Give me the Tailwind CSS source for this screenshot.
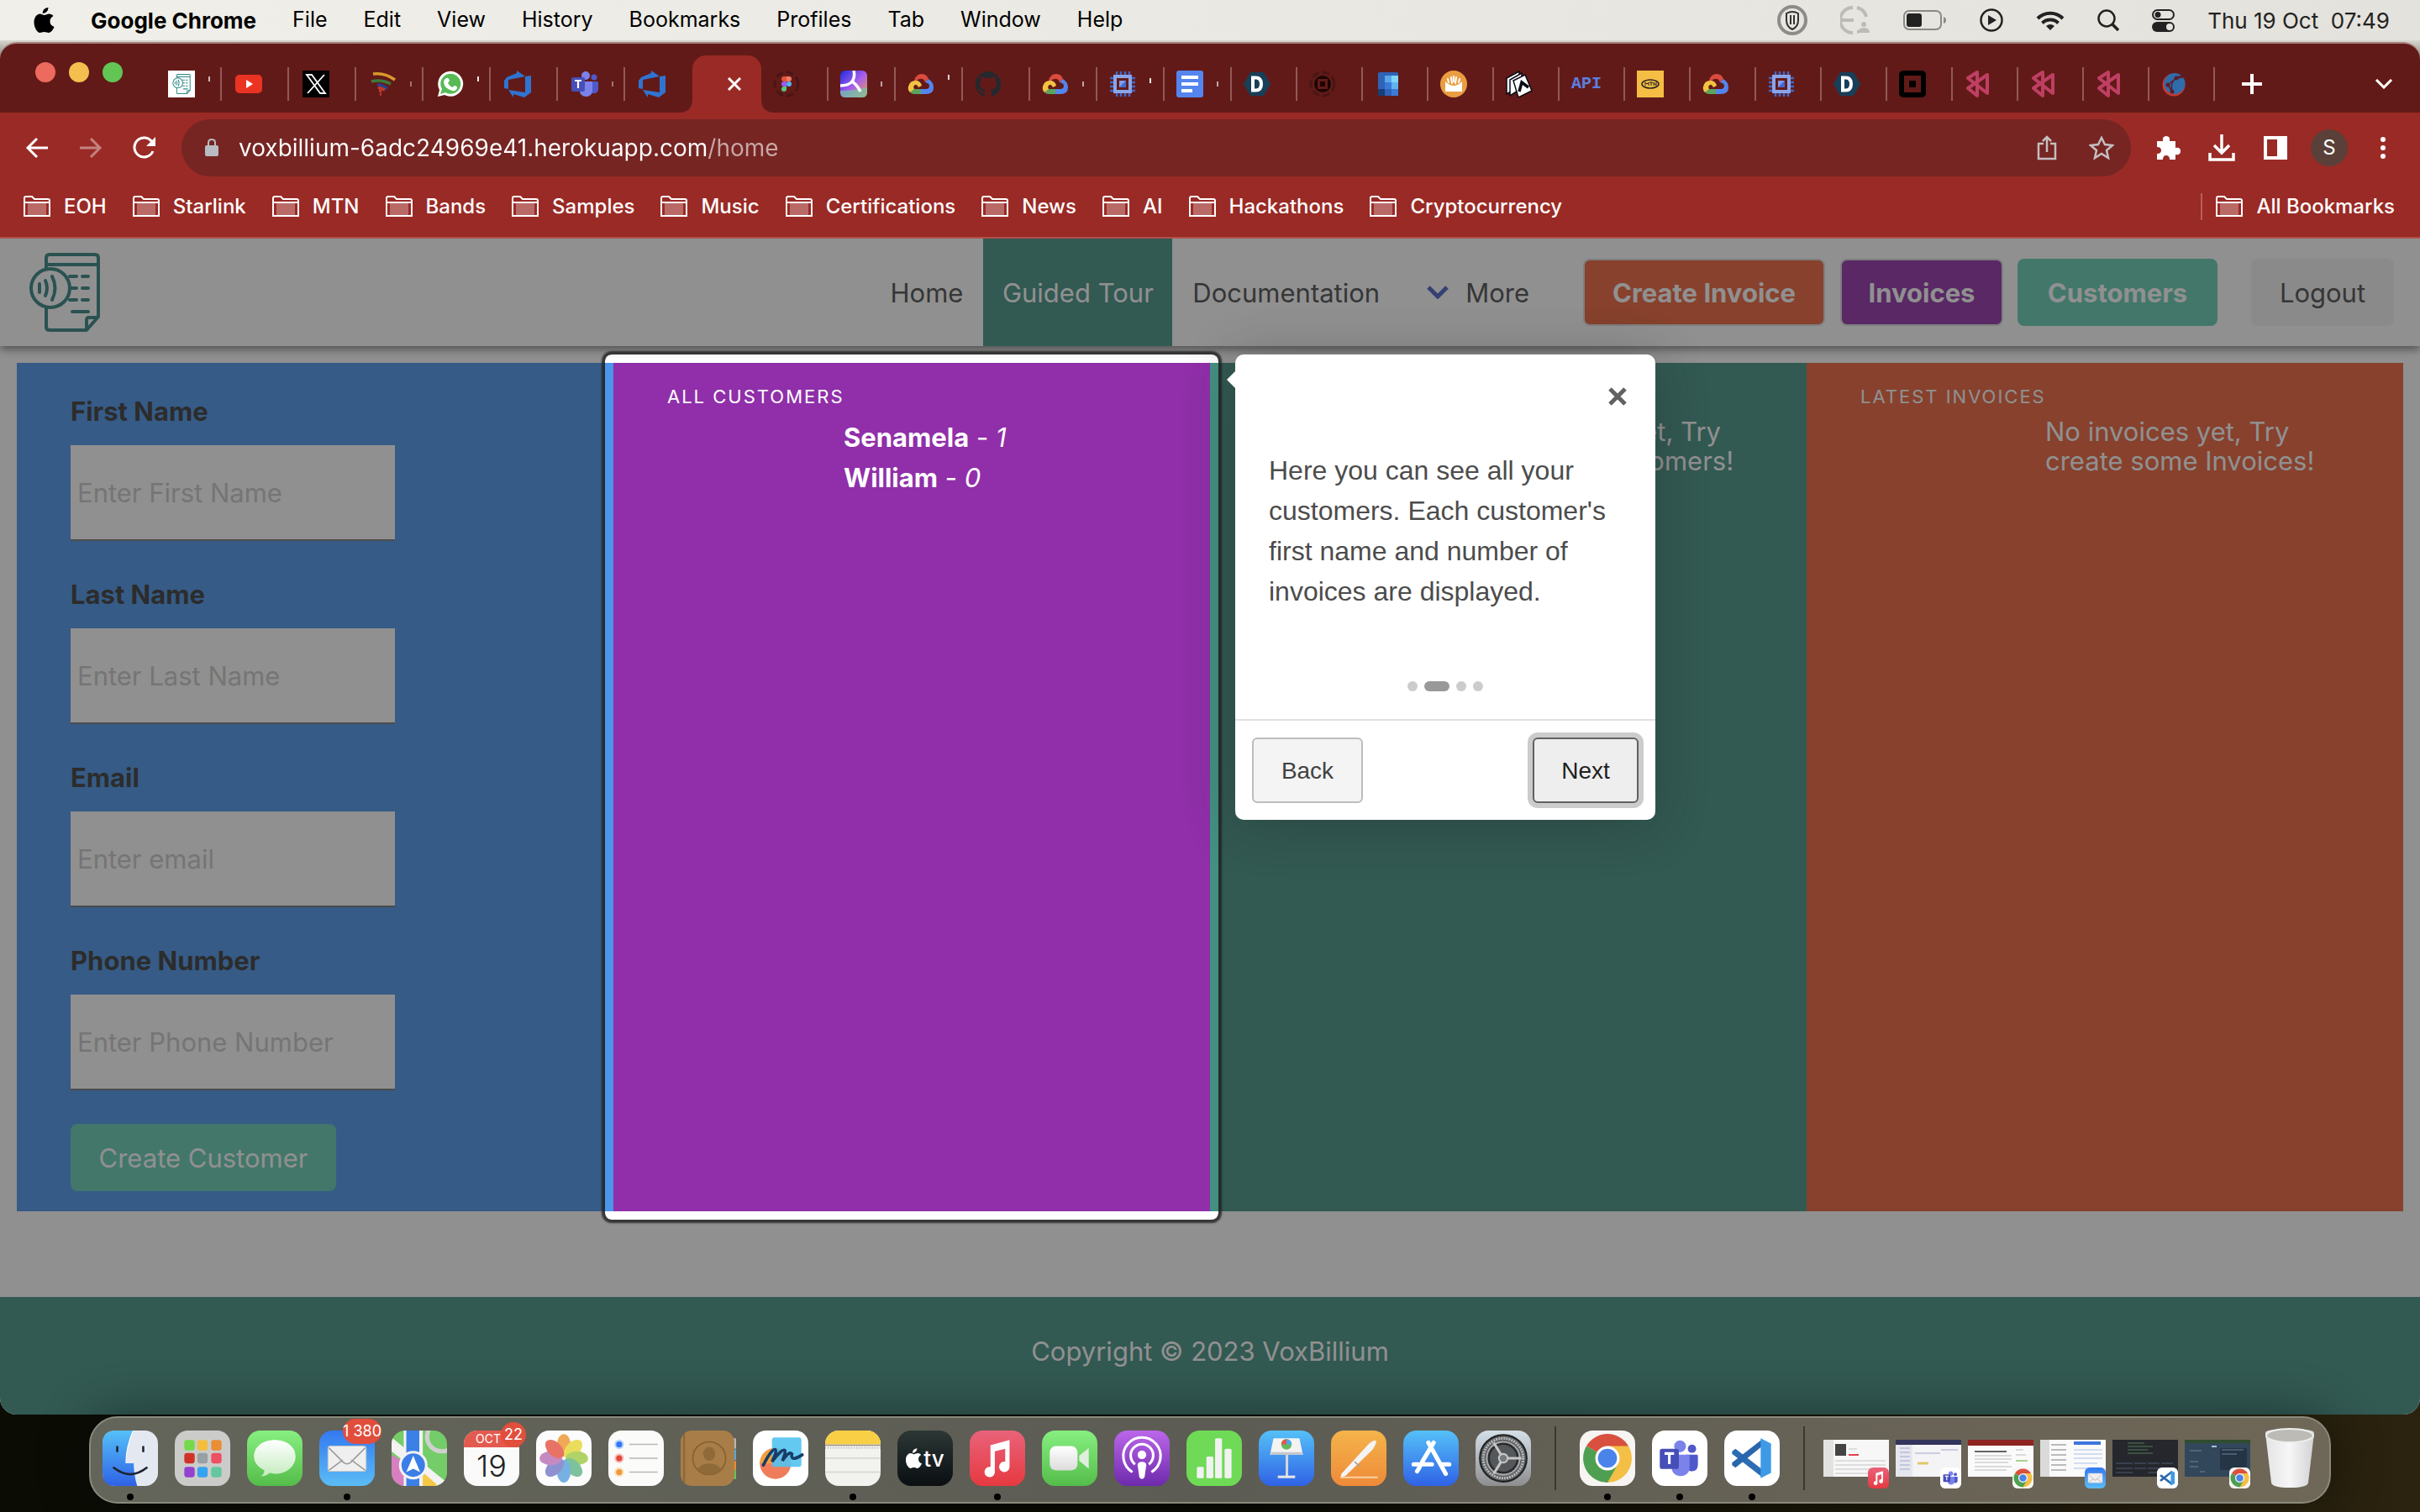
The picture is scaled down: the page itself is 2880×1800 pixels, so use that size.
<!DOCTYPE html>
<html lang="en">
<head>
    <meta charset="UTF-8">
    <meta name="viewport" content="width=device-width, initial-scale=1.0">
    <title>VoxBillium</title>
    <script src="https://cdn.jsdelivr.net/npm/@tailwindcss/browser@4"></script>
</head>
<body class="min-h-screen flex flex-col overflow-hidden bg-linear-to-r from-[#0b0d05] via-[#0a0b04] to-[#2b230f] font-['Inter',sans-serif]">

    <!-- Shared icons -->
    <svg class="absolute size-0" aria-hidden="true">
        <defs>
            <linearGradient id="gBlue" x2="0" y2="1"><stop stop-color="#3478f0"/><stop offset="1" stop-color="#5bbdf6"/></linearGradient>
            <linearGradient id="gSky" x2="0" y2="1"><stop stop-color="#55c0f8"/><stop offset="1" stop-color="#2f62e6"/></linearGradient>
            <linearGradient id="gGreen" x2="0" y2="1"><stop stop-color="#86ef80"/><stop offset="1" stop-color="#55bd4a"/></linearGradient>
            <linearGradient id="gRed" x2="0" y2="1"><stop stop-color="#e9637a"/><stop offset="1" stop-color="#e63940"/></linearGradient>
            <linearGradient id="gPurple" x2="0" y2="1"><stop stop-color="#bb66ea"/><stop offset="1" stop-color="#6e2aac"/></linearGradient>
            <linearGradient id="gOrange" x2="0" y2="1"><stop stop-color="#f5b44b"/><stop offset="1" stop-color="#ee8a38"/></linearGradient>
            <linearGradient id="gWhite" x2="0" y2="1"><stop stop-color="#ffffff"/><stop offset="1" stop-color="#dcdcdc"/></linearGradient>
            <linearGradient id="gBubble" x2="0" y2="1"><stop stop-color="#ffffff"/><stop offset="1" stop-color="#c3ecbd"/></linearGradient>
            <linearGradient id="gGray" x2="0" y2="1"><stop stop-color="#d4dfe8"/><stop offset="1" stop-color="#8e8e90"/></linearGradient>
            <linearGradient id="gRainbow" x2="1" y2="1"><stop stop-color="#1b2be0"/><stop offset=".5" stop-color="#a45cf0"/><stop offset="1" stop-color="#f0a050"/></linearGradient>
            <linearGradient id="gTrash"><stop stop-color="#e4e4e6"/><stop offset=".5" stop-color="#f6f6f7"/><stop offset="1" stop-color="#d2d2d4"/></linearGradient>
        </defs>
        <symbol id="folder" viewBox="0 0 32 26">
            <path d="M5 9h22v14H5z" fill="#b96a67"/>
            <path d="M1 24V3q0-2 2-2h7l3 3h16q2 0 2 2v18zM1 8h30" fill="none" stroke="#fff" stroke-width="2"/>
        </symbol>
        <symbol id="vox" viewBox="0 0 84 94">
            <g fill="none" stroke="currentColor" stroke-width="4" stroke-linejoin="round">
                <path d="M20 18V6q0-4 4-4h54q4 0 4 4v70L68 92H24q-4 0-4-4V66M20 14h62"/>
                <path d="M68 91V80q0-3 3-3h11"/>
                <circle cx="25" cy="42" r="23"/>
                <path d="M12 37v10M19 33q4 9 0 18M27 28q7 14 0 28" stroke-linecap="round"/>
                <path d="M48 28h8M63 28h7M50 42h6M63 42h7M48 56h8M63 56h7M51 70h19" stroke-linecap="round"/>
            </g>
        </symbol>
        <symbol id="devops" viewBox="0 0 32 32">
            <path d="M0 12 3 8l12-5V0l10 7L5 11v11l-5-1zM32 6v20l-8 6-13-4v4L5 23l20 3V7z" fill="#2f74d0"/>
        </symbol>
        <symbol id="teams" viewBox="0 0 32 32">
            <circle cx="17" cy="6" r="5" fill="#7b83eb"/><circle cx="27" cy="8" r="3.5" fill="#5059c9"/>
            <path d="M22 13h9a1 1 0 0 1 1 1v7c0 4-2 6-5 6s-5-2-5-5z" fill="#5059c9"/>
            <path d="M10 13h15v11c0 4-3 7-7.500 7S10 28 10 24z" fill="#7b83eb"/>
            <rect y="8" width="16" height="17" rx="2" fill="#464eb8"/>
            <path d="M4 12h8M8 12v9" stroke="#fff" stroke-width="2.200"/>
        </symbol>
        <symbol id="gcloud" viewBox="0 0 32 32">
            <path d="M8 12q2-8 9-8 6 0 8 6l-4 4q-2-5-6-4-3 0-4 3z" fill="#db4b3e"/>
            <path d="M25 10q6 4 6 10 0 8-9 8h-6v-6h6q4 0 4-4 0-3-5-4z" fill="#5385ee"/>
            <path d="M16 22v6H8q-3 0-5-2l4-4z" fill="#5ba55b"/>
            <path d="M3 26q-3-3-2-7 2-8 10-7 5 1 6 6l-4 2q-2-4-4-3-3 2-1 5z" fill="#f3c243"/>
        </symbol>
        <symbol id="chip" viewBox="0 0 32 32">
            <path d="M9 1v30M14 1v30M19 1v30M24 1v30M1 9h30M1 14h30M1 19h30M1 24h30" stroke="#4267c4" stroke-width="2.500"/>
            <rect x="7" y="7" width="18" height="18" fill="#641a18" stroke="#8aa5ea" stroke-width="4"/>
            <path d="M12 12h8v8h-8z" fill="#7d9be8"/><path d="m20 12v8h-8z" fill="#4169d2"/>
        </symbol>
        <symbol id="dhex" viewBox="0 0 32 32">
            <path d="M8 2h16l8 14-8 14H8L0 16z" fill="#183f57"/>
            <path d="M11 8.500v15h3.500q6.500 0 6.500-7.500t-6.500-7.500z" fill="none" stroke="#fff" stroke-width="4"/>
        </symbol>
        <symbol id="pink" viewBox="0 0 32 32">
            <path d="M15 2v28L4 21l23-16v22L4 9z" fill="none" stroke="#bf3f63" stroke-width="4" stroke-linejoin="round"/>
        </symbol>
        <symbol id="chrome" viewBox="0 0 64 64">
            <path d="M32 32 7.700 18A28 28 0 0 1 56.300 18z" fill="#d9503f"/>
            <path d="M32 32V18h24.300A28 28 0 0 1 32 60z" fill="#f3bf45"/>
            <path d="M20 25 7.700 18A28 28 0 0 0 32 60l12-21-18 5z" fill="#4f9f52"/>
            <circle cx="32" cy="32" r="14" fill="#fff"/><circle cx="32" cy="32" r="11" fill="#4a83ea"/>
        </symbol>
        <symbol id="chromeApp" viewBox="0 0 64 64"><rect width="64" height="64" rx="15" fill="#f6f5f2"/><use href="#chrome"/></symbol>
        <symbol id="teamsApp" viewBox="0 0 64 64"><rect width="64" height="64" rx="15" fill="#fff"/><use href="#teams" x="8" y="10" width="46" height="44"/></symbol>
        <symbol id="codeApp" viewBox="0 0 64 64">
            <rect width="64" height="64" rx="15" fill="#fff"/>
            <path d="m9 24 4-3 31 24v9L9 27z" fill="#2c6cb5"/><path d="m9 40 4 3 31-25V10L9 37z" fill="#2a66ad"/>
            <path d="m42 9 12 6v34l-12 6z" fill="#3f9ae6"/>
        </symbol>
        <symbol id="musicApp" viewBox="0 0 64 64">
            <rect width="64" height="64" rx="15" fill="url(#gRed)"/>
            <path d="M24 17 46 11v31a6 6 0 1 1-5-6V21l-12 3v23a6 6 0 1 1-5-5z" fill="#fff"/>
        </symbol>
        <symbol id="mailApp" viewBox="0 0 64 64">
            <rect width="64" height="64" rx="15" fill="url(#gBlue)"/>
            <rect x="10" y="18" width="44" height="29" rx="3" fill="#efefef" stroke="#c9c9c9"/>
            <path d="m11 20 17 17q4 3 8 0l17-17M11 46l16-12M53 46 37 34" fill="none" stroke="#9b9b9b" stroke-width="1.500"/>
        </symbol>
        <symbol id="apple" viewBox="0 0 24 30">
            <path d="M17 0q0 3-2 5t-5 2q0-3 2-5t5-2zM12 9c2 0 4-1.500 6-1.500s4 1 5 2.500q-4 2-4 6.500t5 6.500c-1 3-4 7-6.500 7-2 0-3-1-5.500-1s-3 1-5 1C4 30 0 24 0 17.500S4 7.500 7 7.500c2 0 3.500 1.500 5 1.500z"/>
        </symbol>
    </svg>

    <!-- macOS menu bar -->
    <header class="h-12 shrink-0 bg-linear-to-r from-[#f0efe9] to-[#e4e2dc] flex items-center justify-between pl-10 pr-9 text-[25px] text-black">
        <nav class="flex items-center gap-[43px]">
            <button aria-label="Apple menu"><svg class="w-[25px] h-[30px]"><use href="#apple"/></svg></button>
            <button class="text-[26px] font-bold">Google Chrome</button>
            <button>File</button>
            <button>Edit</button>
            <button>View</button>
            <button>History</button>
            <button>Bookmarks</button>
            <button>Profiles</button>
            <button>Tab</button>
            <button>Window</button>
            <button>Help</button>
        </nav>
        <div class="flex items-center gap-[39px] text-[#222]">
            <svg class="size-9" viewBox="0 0 36 36" fill="none"><circle cx="18" cy="18" r="16" stroke="#8d8c88" stroke-width="4"/><path d="M11 10q7-4 14 0v8q0 8-7 11-7-3-7-11zM16 12v11M20 12v11" stroke="#333" stroke-width="2"/></svg>
            <svg class="size-9" viewBox="0 0 36 36" fill="none" stroke="#bdbbb5" stroke-width="4"><path d="M15 3A15 15 0 0 0 15 33M20 3q9 2 11 11M2 18h14M20 32h2"/><circle cx="28" cy="23" r="3" fill="#bdbbb5" stroke="none"/><path d="M21 33q0-6 7-6t7 6z" fill="#bdbbb5" stroke="none"/></svg>
            <svg class="w-[52px] h-6" viewBox="0 0 52 24"><rect x="1" y="1" width="44" height="22" rx="6" fill="none" stroke="#8a8984" stroke-width="2"/><rect x="4" y="4" width="18" height="16" rx="3" fill="#222"/><path d="M48 8q3 1 3 4t-3 4z" fill="#8a8984"/></svg>
            <svg class="size-[28px]" viewBox="0 0 28 28"><circle cx="14" cy="14" r="12.500" fill="none" stroke="#222" stroke-width="2.500"/><path d="m10 8 10 6-10 6z" fill="#222"/></svg>
            <svg class="w-[34px] h-[25px]" viewBox="0 0 34 25" fill="none" stroke="#222" stroke-width="4"><path d="M2 10a21 21 0 0 1 30 0M7.500 15.500a13.500 13.500 0 0 1 19 0"/><path d="m17 24-5-5q5-4 10 0z" fill="#222" stroke="none"/></svg>
            <svg class="size-[26px]" viewBox="0 0 26 26" fill="none" stroke="#222" stroke-width="2.500"><circle cx="11" cy="11" r="9.500"/><path d="m18 18 7 7" stroke-width="3.500"/></svg>
            <svg class="size-[27px]" viewBox="0 0 27 27"><rect x="1" y="1" width="25" height="11" rx="5.500" fill="none" stroke="#222" stroke-width="2"/><circle cx="7" cy="6.500" r="3.500" fill="#222"/><rect y="15" width="27" height="12" rx="6" fill="#222"/><circle cx="21" cy="21" r="4" fill="#e6e4de"/></svg>
            <button class="whitespace-pre text-[26px]">Thu 19 Oct  07:49</button>
        </div>
    </header>

    <!-- Browser window -->
    <div class="bg-linear-to-b from-[#d8d6cf] from-0% to-transparent to-3% pt-0.5">
    <div class="rounded-[20px] overflow-hidden border-t-2 border-[#a9817e] bg-[#621a18]">

        <!-- Tab strip -->
        <div class="h-[82px] flex items-center pr-8">
            <div class="flex gap-4 pl-[42px] pr-[38px] pb-[14px] shrink-0">
                <button aria-label="Close window" class="size-6 rounded-full bg-[#ed6a5f]"></button>
                <button aria-label="Minimise window" class="size-6 rounded-full bg-[#f5bf4f]"></button>
                <button aria-label="Zoom window" class="size-6 rounded-full bg-[#62c554]"></button>
            </div>
            <div class="flex items-end flex-1 h-full pt-[14px]">
                <div class="flex items-center h-[68px] *:w-20 *:h-10 *:pl-4 *:flex *:items-center *:gap-4 *:border-r-2 *:border-[#8f5a58] *:last:border-transparent">
                    <a href="#"><svg class="size-8 bg-white text-[#2f8a86] p-1 shrink-0"><use href="#vox"/></svg><i class="w-0.5 h-1.5 mb-3 bg-white/70"></i></a>
                    <a href="#"><svg class="size-8" viewBox="0 0 32 32"><rect y="5" width="32" height="22" rx="5" fill="#ea3323"/><path d="m13 11 8 5-8 5z" fill="#fff"/></svg></a>
                    <a href="#"><svg class="size-8" viewBox="0 0 32 32"><path d="M0 0h32v32H0z"/><path d="M5 5h6l16 22h-6zM26 5 6 27" fill="none" stroke="#fff" stroke-width="1.800"/></svg></a>
                    <a href="#"><svg class="size-8" viewBox="0 0 32 32" fill="none" stroke-width="3.500"><path d="M4 4q14-2 26 7" stroke="#d9982b"/><path d="M2 13q12-3 23 3" stroke="#3d7a3a"/><path d="M9 17q7 0 12 5" stroke="#243f8f"/><path d="m10 20 8 3M11 24h3M12 28h2" stroke="#c03a2b"/></svg><i class="w-0.5 h-1.5 bg-white/40"></i></a>
                    <a href="#"><svg class="size-8" viewBox="0 0 32 32"><path d="M1 31 3 23A15 15 0 1 1 9 29z" fill="#fff"/><path d="m4 28 2-6a12 12 0 1 1 4 4z" fill="#57bb55"/><path d="M11 9q3-1 4 3l-2 3q2 3 5 5l3-2q4 1 3 3-2 4-6 3-10-3-10-11 1-3 3-4z" fill="#fff"/></svg><i class="w-0.5 h-1.5 mb-3 bg-white/90"></i></a>
                    <a href="#"><svg class="size-8"><use href="#devops"/></svg></a>
                    <a href="#"><svg class="size-8"><use href="#teams"/></svg><i class="w-0.5 h-1.5 bg-white/40"></i></a>
                    <a href="#"><svg class="size-8"><use href="#devops"/></svg></a>
                </div>
                <div class="relative w-[82px] h-[68px] rounded-t-2xl bg-[#9a2a25] flex items-center justify-end pr-6">
                    <svg class="absolute right-full bottom-0 size-4" viewBox="0 0 16 16"><path d="M16 0v16H0Q16 16 16 0" fill="#9a2a25"/></svg>
                    <svg class="absolute left-full bottom-0 size-4" viewBox="0 0 16 16"><path d="M0 0v16h16Q0 16 0 0" fill="#9a2a25"/></svg>
                    <button aria-label="Close tab"><svg class="size-4" viewBox="0 0 16 16"><path d="m1 1 14 14M15 1 1 15" stroke="#fff" stroke-width="3"/></svg></button>
                </div>
                <div class="flex items-center h-[68px] *:w-20 *:h-10 *:pl-[14px] *:flex *:items-center *:gap-4 *:border-r-2 *:border-[#8f5a58]">
                    <a href="#"><svg class="size-8" viewBox="0 0 32 32"><circle cx="16" cy="16" r="14" fill="none" stroke="#481613" stroke-width="3" stroke-dasharray="9 4"/><path d="M16 7h-3a3 3 0 0 0 0 6h3z" fill="#e2553a"/><path d="M16 7h3a3 3 0 0 1 0 6h-3z" fill="#ee7a64"/><path d="M16 13h-3a3 3 0 0 0 0 6h3z" fill="#9a5cf0"/><circle cx="19" cy="16" r="3" fill="#54b4f5"/><path d="M16 19h-3a3 3 0 1 0 3 3z" fill="#56c87d"/></svg></a>
                    <a href="#"><svg class="size-8" viewBox="0 0 32 32"><rect width="32" height="32" rx="6" fill="url(#gRainbow)"/><path d="M0 24q16 0 32-4v6q0 6-6 6H6q-6 0-6-6z" fill="#6bc9a8" opacity=".7"/><path d="M16 0q2 8-2 13T0 18M14 13q6 4 10 12" fill="none" stroke="#fff" stroke-width="3.500"/></svg><i class="w-0.5 h-1.5 bg-white/60"></i></a>
                    <a href="#"><svg class="size-8"><use href="#gcloud"/></svg><i class="w-0.5 h-1.5 mb-4 bg-white/80"></i></a>
                    <a href="#"><svg class="size-8" viewBox="0 0 32 32"><path d="M16 1a15.500 15.500 0 0 0-5 30q1 0 1-1v-3q-5 1-6-3l-2-2q2-1 4 2 2 2 4 1l1-2q-7-1-7-8 0-3 2-4-1-2 0-4 2 0 4 2 4-1 8 0 2-2 4-2 1 2 0 4 2 2 2 4 0 7-7 8l1 3v4q0 1 1 1a15.500 15.500 0 0 0-5-30z" fill="#24292e"/></svg></a>
                    <a href="#"><svg class="size-8"><use href="#gcloud"/></svg><i class="w-0.5 h-1.5 bg-white/60"></i></a>
                    <a href="#"><svg class="size-8"><use href="#chip"/></svg><i class="w-0.5 h-1.5 mb-2 bg-white/90"></i></a>
                    <a href="#"><svg class="size-8" viewBox="0 0 32 32"><rect width="32" height="32" rx="3" fill="#5485ee"/><path d="M6 8h20M6 16h20M6 24h13" stroke="#fff" stroke-width="4"/></svg><i class="w-0.5 h-1.5 bg-white/60"></i></a>
                </div>
                <div class="flex items-center h-[68px] *:w-[78px] *:h-10 *:pl-[14px] *:flex *:items-center *:border-r-2 *:border-[#8f5a58]">
                    <a href="#"><svg class="size-8"><use href="#dhex"/></svg></a>
                    <a href="#"><svg class="size-8" viewBox="0 0 32 32"><circle cx="16" cy="16" r="14" fill="none" stroke="#481613" stroke-width="3" stroke-dasharray="9 4"/><circle cx="16" cy="16" r="10" fill="#1b0504"/><rect x="11.500" y="11.500" width="9" height="9" fill="#1b0504" stroke="#621a18" stroke-width="3"/></svg></a>
                    <a href="#"><svg class="size-8" viewBox="0 0 32 32"><rect x="4" y="2" width="24" height="28" rx="2" fill="#2f63b8"/><path d="M12 6h8v8h-8z" fill="#5aa6ea"/><path d="M20 6h8v8h-8z" fill="#7fd6fa"/><path d="M12 14h8v8h-8z" fill="#3a7ad8"/><path d="M20 14h8v8h-8z" fill="#62b3f0"/><path d="M20 22h8v8h-8z" fill="#3a7ad8"/><path d="M4 22h8v8H4z" fill="#173f78"/></svg></a>
                    <a href="#"><svg class="size-8" viewBox="0 0 32 32"><circle cx="16" cy="16" r="16" fill="#eb9e41"/><path d="M6 13q10 10 20 0v12H6z" fill="#fff"/><path d="m10 14-1-4M14 15l-1-7M18 15l1-7M22 14l1-4M16 13V7" stroke="#fff" stroke-width="2" stroke-linecap="round"/></svg></a>
                    <a href="#"><svg class="size-8" viewBox="0 0 32 32" stroke="#0b0b14" stroke-width="1.500"><path d="M1 9 16 1v18L1 28z" fill="#fff"/><path d="m5 11 14-8v18L5 30z" fill="#fff"/><path d="m9 12 14-7 8 19-16 8z" fill="#fff"/><path d="m16 25 3-11 8 6" fill="none" stroke-width="3.500"/></svg></a>
                    <a href="#" class="text-[20px] leading-8 font-bold text-[#5b7fe0] font-['Liberation_Mono',monospace]">API</a>
                    <a href="#"><svg class="size-8" viewBox="0 0 32 32"><path d="M0 0h32v32H0z" fill="#f6bd44"/><ellipse cx="16" cy="16" rx="10" ry="5" fill="none" stroke="#222" stroke-width="1.500"/><path d="M10 18v-4l2 2 2-2v4M15 14h4M17 14v4M20 18v-4l3 4v-4" fill="none" stroke="#222"/></svg></a>
                    <a href="#"><svg class="size-8"><use href="#gcloud"/></svg></a>
                    <a href="#"><svg class="size-8"><use href="#chip"/></svg></a>
                    <a href="#"><svg class="size-8"><use href="#dhex"/></svg></a>
                    <a href="#"><svg class="size-8" viewBox="0 0 32 32"><rect x="3" y="3" width="26" height="26" rx="2" fill="none" stroke="#000" stroke-width="6"/><rect x="12" y="12" width="8" height="8" rx="1"/></svg></a>
                    <a href="#"><svg class="size-8"><use href="#pink"/></svg></a>
                    <a href="#"><svg class="size-8"><use href="#pink"/></svg></a>
                    <a href="#"><svg class="size-8"><use href="#pink"/></svg></a>
                    <a href="#"><svg class="size-8" viewBox="0 0 32 32"><circle cx="15" cy="17" r="13.500" fill="#c63a31"/><circle cx="16" cy="15.500" r="12.500" fill="#2f6cab"/><path d="M27 6Q9 8 13 26M8 17 18 9l8-1M8 17l5 8" fill="none" stroke="#5a1d2b" stroke-width="1.500"/><circle cx="18" cy="9" r="2.500" fill="#5a1d2b"/><circle cx="8" cy="17" r="2.500" fill="#5a1d2b"/><circle cx="13" cy="25" r="2.500" fill="#5a1d2b"/></svg></a>
                </div>
                <div class="flex flex-1 items-center justify-between h-[68px] pl-8">
                    <button aria-label="New tab"><svg class="size-6" viewBox="0 0 24 24"><path d="M12 0v24M0 12h24" stroke="#fff" stroke-width="4"/></svg></button>
                    <button aria-label="Search tabs"><svg class="w-[22px] h-3" viewBox="0 0 22 12"><path d="m2 1 9 9 9-9" fill="none" stroke="#fff" stroke-width="3"/></svg></button>
                </div>
            </div>
        </div>

        <!-- Toolbar -->
        <div class="bg-[#9a2a25] border-b-2 border-[#b0504b]">
            <div class="flex items-center pt-2 pl-[30px] pr-7">
                <div class="flex gap-9 shrink-0 text-white">
                    <button aria-label="Back"><svg class="size-7" viewBox="0 0 28 28" fill="none" stroke="currentColor" stroke-width="3"><path d="M27 14H3M14 3 3 14l11 11"/></svg></button>
                    <button aria-label="Forward" class="text-[#c4827f]"><svg class="size-7" viewBox="0 0 28 28" fill="none" stroke="currentColor" stroke-width="3"><path d="M1 14h24M14 3l11 11-11 11"/></svg></button>
                    <button aria-label="Reload"><svg class="size-7" viewBox="0 0 28 28"><path d="M24 18A11.500 11.500 0 1 1 23 7" fill="none" stroke="currentColor" stroke-width="3"/><path d="M27 1v11H16z" fill="currentColor"/></svg></button>
                </div>
                <div class="flex flex-1 items-center ml-[30px] mr-7 pl-7 pr-5 h-[68px] rounded-full bg-[#762523] text-[#c3bfc0]">
                    <svg class="w-4 h-[22px] shrink-0" viewBox="0 0 16 22"><rect y="8" width="16" height="13" rx="2" fill="#b9bcc0"/><path d="M4 9V5q0-4 4-4t4 4v4" fill="none" stroke="#b9bcc0" stroke-width="2"/></svg>
                    <input type="text" aria-label="Address" value="voxbillium-6adc24969e41.herokuapp.com/home" class="flex-1 ml-6 h-12 text-[28px] outline-none bg-linear-to-r from-white from-[558px] to-[#c8a7a5] to-[558px] bg-clip-text text-transparent">
                    <button aria-label="Share" class="mr-[38px]"><svg class="w-[24px] h-[30px]" viewBox="0 0 24 30" fill="none" stroke="currentColor" stroke-width="2.500"><path d="M8 10H2v18h20V10h-6M12 20V2M7 7l5-5 5 5"/></svg></button>
                    <button aria-label="Bookmark"><svg class="size-[30px]" viewBox="0 0 30 30"><path d="m15 3 4 8 9 1-7 6 2 9-8-5-8 5 2-9-7-6 9-1z" fill="none" stroke="currentColor" stroke-width="2.500"/></svg></button>
                </div>
                <div class="flex items-center gap-8 text-white">
                    <button aria-label="Extensions"><svg class="size-8" viewBox="0 0 32 32"><path d="M3 8h7q-1-6 4-6t4 6h7v8q6-1 6 4t-6 4v6h-7q0-5-4-5t-4 5H3v-7q5 0 5-4t-5-4z" fill="currentColor"/></svg></button>
                    <button aria-label="Downloads"><svg class="size-8" viewBox="0 0 32 32" fill="none" stroke="currentColor" stroke-width="3.500"><path d="M16 0v21M7 13l9 9 9-9M2 22v8h28v-8"/></svg></button>
                    <button aria-label="Side panel"><svg class="size-8" viewBox="0 0 32 32"><path d="M2 2h28v28H2zM6 6v20h12V6z" fill="currentColor" fill-rule="evenodd"/></svg></button>
                    <button class="size-11 -mx-1.5 rounded-full bg-[#5a4038] text-[24px]">S</button>
                    <button aria-label="Menu"><svg class="size-8" viewBox="0 0 32 32" fill="currentColor"><circle cx="16" cy="6" r="3"/><circle cx="16" cy="16" r="3"/><circle cx="16" cy="26" r="3"/></svg></button>
                </div>
            </div>
            <div class="flex items-center justify-between h-[72px] pl-7 pr-[30px] text-[24px] font-medium text-white">
                <nav class="flex items-center gap-[31px] *:flex *:items-center *:gap-4">
                    <a href="#"><svg class="w-8 h-[26px]"><use href="#folder"/></svg>EOH</a>
                    <a href="#"><svg class="w-8 h-[26px]"><use href="#folder"/></svg>Starlink</a>
                    <a href="#"><svg class="w-8 h-[26px]"><use href="#folder"/></svg>MTN</a>
                    <a href="#"><svg class="w-8 h-[26px]"><use href="#folder"/></svg>Bands</a>
                    <a href="#"><svg class="w-8 h-[26px]"><use href="#folder"/></svg>Samples</a>
                    <a href="#"><svg class="w-8 h-[26px]"><use href="#folder"/></svg>Music</a>
                    <a href="#"><svg class="w-8 h-[26px]"><use href="#folder"/></svg>Certifications</a>
                    <a href="#"><svg class="w-8 h-[26px]"><use href="#folder"/></svg>News</a>
                    <a href="#"><svg class="w-8 h-[26px]"><use href="#folder"/></svg>AI</a>
                    <a href="#"><svg class="w-8 h-[26px]"><use href="#folder"/></svg>Hackathons</a>
                    <a href="#"><svg class="w-8 h-[26px]"><use href="#folder"/></svg>Cryptocurrency</a>
                </nav>
                <a href="#" class="flex items-center gap-4 h-8 pl-4 border-l-2 border-[#b85f5b]"><svg class="w-8 h-[26px]"><use href="#folder"/></svg>All Bookmarks</a>
            </div>
        </div>

        <!-- Page -->
        <div class="relative overflow-hidden bg-white text-[32px] leading-[35px] text-[#4a4a4a]">
            <nav class="h-32 flex items-center justify-between pl-[35px] pr-[31px] shadow-[0_4px_10px_rgba(0,0,0,0.5)]">
                <a href="#" aria-label="VoxBillium home"><svg class="w-[84px] h-[94px] text-[#338281]"><use href="#vox"/></svg></a>
                <div class="flex items-center h-full text-[31px]">
                    <a href="#" class="px-6">Home</a>
                    <a href="#" class="h-full w-[225px] flex items-center justify-center bg-[#439083] text-white">Guided Tour</a>
                    <a href="#" class="px-6">Documentation</a>
                    <button class="flex items-center gap-5 pl-8 pr-6">
                        <svg class="w-[26px] h-4" viewBox="0 0 26 16"><path d="m2 2 11 11L24 2" fill="none" stroke="#485fc7" stroke-width="5"/></svg>More
                    </button>
                    <div class="flex items-center ml-10 *:h-20 *:rounded-lg *:whitespace-nowrap">
                        <button class="w-[288px] mr-[18px] border-2 border-[#dbdbdb] bg-[#ed6139] text-white font-bold">Create Invoice</button>
                        <button class="w-[194px] mr-[17px] border-2 border-[#dbdbdb] bg-[#902fa9] text-white font-bold">Invoices</button>
                        <button class="w-[238px] mr-10 bg-[#63cdb3] text-white font-bold">Customers</button>
                        <button class="w-[170px] bg-[#f3f3f3]">Logout</button>
                    </div>
                </div>
            </nav>

            <main class="grid grid-cols-4 px-5 pt-5">
                <form class="flex flex-col items-start bg-[#4b95eb] pt-10 pb-6 px-16">
                    <div class="flex flex-col gap-[46px] mb-10 text-[31px]">
                        <div class="flex flex-col">
                            <label for="first" class="h-[38px] mb-5 font-bold text-[#363636]">First Name</label>
                            <input id="first" type="text" placeholder="Enter First Name" class="w-[386px] h-[114px] px-2 bg-white border-b-2 border-[#767676] placeholder:text-[#c8c8c8]">
                        </div>
                        <div class="flex flex-col">
                            <label for="last" class="h-[38px] mb-5 font-bold text-[#363636]">Last Name</label>
                            <input id="last" type="text" placeholder="Enter Last Name" class="w-[386px] h-[114px] px-2 bg-white border-b-2 border-[#767676] placeholder:text-[#c8c8c8]">
                        </div>
                        <div class="flex flex-col">
                            <label for="email" class="h-[38px] mb-5 font-bold text-[#363636]">Email</label>
                            <input id="email" type="email" placeholder="Enter email" class="w-[386px] h-[114px] px-2 bg-white border-b-2 border-[#767676] placeholder:text-[#c8c8c8]">
                        </div>
                        <div class="flex flex-col">
                            <label for="phone" class="h-[38px] mb-5 font-bold text-[#363636]">Phone Number</label>
                            <input id="phone" type="tel" placeholder="Enter Phone Number" class="w-[386px] h-[114px] px-2 bg-white border-b-2 border-[#767676] placeholder:text-[#c8c8c8]">
                        </div>
                    </div>
                    <button type="button" class="w-[316px] h-20 rounded-lg bg-[#63cdb3] text-[31px] text-white">Create Customer</button>
                </form>

                <section class="relative bg-[#902fa9] text-white pt-[26px] px-16">
                    <h2 class="text-[22px] leading-[28px] tracking-[2px] uppercase">All Customers</h2>
                    <ul class="pl-[210px] pt-[11px] text-[31px] leading-[48px]">
                        <li><strong class="font-bold">Senamela</strong> - <em>1</em></li>
                        <li><strong class="font-bold">William</strong> - <em>0</em></li>
                    </ul>

                    <!-- Tour highlight: everything outside it is dimmed -->
                    <div class="absolute -inset-[10px] rounded-lg pointer-events-none shadow-[0_0_2px_4px_rgba(33,33,33,0.8),0_0_0_5000px_rgba(33,33,33,0.5)]"></div>

                    <div role="dialog" aria-label="Guided tour" class="absolute z-10 left-full -top-[10px] ml-[30px] w-[500px] rounded-[10px] bg-white text-[#4c4c4c] shadow-[0_6px_60px_rgba(33,33,33,0.3)] font-['Liberation_Sans',sans-serif]">
                        <svg class="absolute right-full top-5 w-[10px] h-5" viewBox="0 0 10 20"><path d="M10 0v20L0 10z" fill="#fff"/></svg>
                        <div class="h-[74px] flex justify-end items-end pr-[34px] pb-[13px]">
                            <button aria-label="Close"><svg class="size-[22px]" viewBox="0 0 22 22"><path d="m2 2 18 18M20 2 2 20" stroke="#616161" stroke-width="5"/></svg></button>
                        </div>
                        <p class="p-10 text-[32px] leading-[48px]">Here you can see all your customers. Each customer's first name and number of invoices are displayed.</p>
                        <div class="flex justify-center gap-2 pt-[43px] pb-[33px] *:h-3 *:w-3 *:rounded-full *:bg-[#ccc]">
                            <button aria-label="Step 1"></button>
                            <button aria-label="Step 2" class="w-[30px]! bg-[#999]!"></button>
                            <button aria-label="Step 3"></button>
                            <button aria-label="Step 4"></button>
                        </div>
                        <div class="flex justify-between p-5 border-t-2 border-[#e0e0e0] text-[28px]">
                            <button class="w-[132px] h-[78px] rounded-md border-2 border-[#bdbdbd] bg-[#f4f4f4] text-[#424242]">Back</button>
                            <button class="w-[126px] h-[78px] rounded-md border-2 border-[#616161] bg-[#eee] text-[#212121] ring-6 ring-[#ccc]">Next</button>
                        </div>
                    </div>
                </section>

                <section class="bg-[#439083] text-white pt-[26px] px-16">
                    <h2 class="text-[22px] leading-[28px] tracking-[2px] uppercase">Latest Customers</h2>
                    <p class="pl-[220px] pt-[10px] text-[31px]">No customers yet, Try<br>create new Customers!</p>
                </section>

                <section class="bg-[#ed6139] text-white pt-[26px] px-16">
                    <h2 class="text-[22px] leading-[28px] tracking-[2px] uppercase">Latest Invoices</h2>
                    <p class="pl-[220px] pt-[10px] text-[31px]">No invoices yet, Try<br>create some Invoices!</p>
                </section>
            </main>

            <footer class="mt-[102px] h-[140px] pb-3 flex items-center justify-center bg-[#439083] text-white text-[31px]">Copyright © 2023 VoxBillium</footer>
        </div>
    </div>
    </div>

    <!-- Dock -->
    <div class="relative self-center mt-0.5 h-[104px] flex items-center gap-5 pl-[14px] pr-[18px] pb-1 border-2 border-[#8a897c] rounded-[34px] bg-linear-to-r from-[#64655a] via-[#5c5c54] to-[#6f6757] shadow-[0_0_60px_rgba(0,0,0,0.4)]">
        <div class="relative"><svg class="size-[66px]" viewBox="0 0 64 64"><rect width="64" height="64" rx="15" fill="#e4e8f0"/><path d="M15 0h20q-8 20-8 37h9q0 14 4 27H15Q0 64 0 49V15Q0 0 15 0z" fill="url(#gSky)"/><path d="M17 19v5M47 19v5M13 43q19 15 38 0" fill="none" stroke="#1d2430" stroke-width="2.500" stroke-linecap="round"/><path d="M35 1q-8 19-8 36h9" fill="none" stroke="#fff" stroke-width="1"/></svg><i class="absolute left-1/2 -ml-1 top-[75px] size-2 rounded-full bg-black"></i></div>
        <svg class="size-[66px]" viewBox="0 0 64 64"><rect width="64" height="64" rx="15" fill="#cbccca"/><g><rect x="11" y="11" width="12" height="12" rx="3" fill="#76d94c"/><rect x="26" y="11" width="12" height="12" rx="3" fill="#f3be3e"/><rect x="42" y="11" width="12" height="12" rx="3" fill="#e98e35"/><rect x="11" y="26" width="12" height="12" rx="3" fill="#d03228"/><rect x="26" y="26" width="12" height="12" rx="3" fill="#98a0a3"/><rect x="42" y="26" width="12" height="12" rx="3" fill="#ee4f63"/><rect x="11" y="42" width="12" height="12" rx="3" fill="#9541cf"/><rect x="26" y="42" width="12" height="12" rx="3" fill="#35a3f0"/><rect x="42" y="42" width="12" height="12" rx="3" fill="#65c79f"/></g></svg>
        <svg class="size-[66px]" viewBox="0 0 64 64"><rect width="64" height="64" rx="15" fill="url(#gGreen)"/><path d="M32 11c14 0 24 8 24 19S46 50 32 50l-6-1q-4 4-10 4 4-3 4-7-12-6-12-16C8 19 18 11 32 11z" fill="url(#gBubble)"/></svg>
        <div class="relative"><svg class="size-[66px]"><use href="#mailApp"/></svg><span class="absolute -top-[14px] -right-2 h-[30px] w-[46px] rounded-full bg-[#e14e3c] text-white text-[18px] leading-[30px] text-center">1 380</span><i class="absolute left-1/2 -ml-1 top-[75px] size-2 rounded-full bg-black"></i></div>
        <svg class="size-[66px] rounded-2xl" viewBox="0 0 64 64"><path d="M0 0h64v64H0z" fill="#74cd68"/><path d="M0 28 26 42v22H0z" fill="#d77fc0"/><path d="M0 8 64 60v4H50L0 24z" fill="#f2f2f2"/><path d="M34 64h20L36 48z" fill="#f5c944"/><path d="M14 0h22v64H14z" fill="#f2f2f2"/><path d="M17 0h15v64H17z" fill="#3b80e6"/><circle cx="58" cy="7" r="17" fill="none" stroke="#d0d0d0" stroke-width="5"/><circle cx="25" cy="40" r="15" fill="#3b7ee8" stroke="#f2f2f2" stroke-width="3"/><path d="m25 29 8 19-8-4-8 4z" fill="#fff"/></svg>
        <div class="relative"><div class="size-[66px] rounded-2xl overflow-hidden bg-[#fafafa] text-center"><div class="h-5 pr-2 bg-[#e35a4f] text-white text-[14px] leading-5">OCT</div><div class="text-[36px] leading-[44px] font-light text-[#222]">19</div></div><span class="absolute -top-[10px] -right-2 size-[30px] rounded-full bg-[#e14e3c] text-white text-[18px] leading-[30px] text-center">22</span></div>
        <svg class="size-[66px]" viewBox="0 0 64 64"><rect width="64" height="64" rx="15" fill="#fcfcfc"/><g opacity=".85"><ellipse cx="32" cy="17" rx="8" ry="13" fill="#f09a3a"/><ellipse cx="32" cy="17" rx="8" ry="13" fill="#e8d83f" transform="rotate(45 32 32)"/><ellipse cx="32" cy="17" rx="8" ry="13" fill="#a3cc4f" transform="rotate(90 32 32)"/><ellipse cx="32" cy="17" rx="8" ry="13" fill="#68b98c" transform="rotate(135 32 32)"/><ellipse cx="32" cy="17" rx="8" ry="13" fill="#5fa4dd" transform="rotate(180 32 32)"/><ellipse cx="32" cy="17" rx="8" ry="13" fill="#7c80c9" transform="rotate(225 32 32)"/><ellipse cx="32" cy="17" rx="8" ry="13" fill="#bd77b8" transform="rotate(270 32 32)"/><ellipse cx="32" cy="17" rx="8" ry="13" fill="#e55a4c" transform="rotate(315 32 32)"/></g></svg>
        <svg class="size-[66px]" viewBox="0 0 64 64"><rect width="64" height="64" rx="15" fill="#fbfbfa"/><path d="M24 16h33M24 32h33M24 48h33" stroke="#b9b9b9" stroke-width="1.500"/><circle cx="12.500" cy="16" r="4.500" fill="#3478f6" stroke="#bcd3fb" stroke-width="2"/><circle cx="12.500" cy="32" r="4.500" fill="#e5483d" stroke="#f5c2be" stroke-width="2"/><circle cx="12.500" cy="48" r="4.500" fill="#f09a37" stroke="#fae0c0" stroke-width="2"/></svg>
        <svg class="size-[66px]" viewBox="0 0 64 64"><path d="M58 9h6v12h-6z" fill="#b8b8b8"/><path d="M58 22h6v12h-6z" fill="#58a9dd"/><path d="M58 35h6v11h-6z" fill="#e98c35"/><path d="M58 46h6v10h-6z" fill="#68c25c"/><rect width="62" height="64" rx="13" fill="#a87d47"/><path d="M4 3v58" stroke="#8c6637" stroke-width="2"/><circle cx="33" cy="32" r="19" fill="none" stroke="#84602f" stroke-width="1.500"/><ellipse cx="33" cy="27" rx="7" ry="8" fill="#8f6a39"/><path d="M19 45q4-7 14-7t14 7q-14 12-28 0z" fill="#8f6a39"/></svg>
        <svg class="size-[66px]" viewBox="0 0 64 64"><rect width="64" height="64" rx="15" fill="#fff"/><circle cx="26" cy="38" r="18" fill="#ef7d5c"/><path d="M8 38a18 18 0 0 1 14-17v17z" fill="#f2a13c"/><rect x="22" y="8" width="34" height="34" rx="3" fill="#52c3f0" opacity=".9"/><path d="M12 40q10-20 14-18 2 2-4 14 12-16 15-13 1 2-3 12 8-12 11-8-2 10 12 1" fill="none" stroke="#173c68" stroke-width="3.500" stroke-linecap="round"/></svg>
        <div class="relative"><svg class="size-[66px] rounded-2xl" viewBox="0 0 64 64"><path d="M0 0h64v64H0z" fill="#f2f2ef"/><path d="M0 0h64v16H0z" fill="#f8cf45"/><path d="M0 17h64" stroke="#9a948a" stroke-width="1.500"/><path d="M0 20h64" stroke="#bbb" stroke-width="2" stroke-dasharray="1 2"/><path d="M0 32h64M0 48h64" stroke="#d4d4d2" stroke-width="1.500"/></svg><i class="absolute left-1/2 -ml-1 top-[75px] size-2 rounded-full bg-black"></i></div>
        <div class="size-[66px] rounded-2xl bg-linear-to-b from-[#2c3836] to-[#0b0f12] flex items-center justify-center gap-0.5 text-[26px] font-medium text-white"><svg class="w-[19px] h-6 fill-white"><use href="#apple"/></svg>tv</div>
        <div class="relative"><svg class="size-[66px]"><use href="#musicApp"/></svg><i class="absolute left-1/2 -ml-1 top-[75px] size-2 rounded-full bg-black"></i></div>
        <svg class="size-[66px]" viewBox="0 0 64 64"><rect width="64" height="64" rx="15" fill="url(#gGreen)"/><rect x="9" y="18" width="32" height="28" rx="7" fill="url(#gWhite)"/><path d="m43 29 11-9v24l-11-9z" fill="#dfeedd"/></svg>
        <svg class="size-[66px]" viewBox="0 0 64 64"><rect width="64" height="64" rx="15" fill="url(#gPurple)"/><path d="M21 48A21.500 21.500 0 1 1 43 48M24 39a13 13 0 1 1 16 0" fill="none" stroke="#fff" stroke-width="3"/><circle cx="32" cy="28" r="5" fill="#fff"/><path d="M27 40q0-4 5-4t5 4l-2 14q-3 4-6 0z" fill="#fff"/></svg>
        <svg class="size-[66px]" viewBox="0 0 64 64"><rect width="64" height="64" rx="15" fill="#6fda55"/><rect x="12" y="42" width="8" height="13" rx="1.500" fill="#f2f2f2"/><rect x="23" y="30" width="8" height="25" rx="1.500" fill="#f2f2f2"/><rect x="33" y="9" width="8" height="46" rx="1.500" fill="#f2f2f2"/><rect x="44" y="21" width="8" height="34" rx="1.500" fill="#f2f2f2"/></svg>
        <svg class="size-[66px]" viewBox="0 0 64 64"><rect width="64" height="64" rx="15" fill="url(#gSky)"/><path d="M17 9h30l4 19H13z" fill="#f3f3f3"/><path d="M14 25h36v3H14z" fill="#c5c8cc"/><circle cx="32" cy="16" r="6" fill="#64b95b"/><path d="M32 16V10a6 6 0 0 1 6 6z" fill="#4aa7ee"/><path d="M32 16h-6a6 6 0 0 1 6-6z" fill="#e3574c"/><path d="M31 28h3v25h-3z" fill="#d5d7db"/><path d="M22 52h20v3H22z" fill="#e5e5e5"/></svg>
        <svg class="size-[66px]" viewBox="0 0 64 64"><rect width="64" height="64" rx="15" fill="url(#gOrange)"/><path d="m12 50 31-34q7-6 9-4 1 2-4 10L17 52l-6 3z" fill="#f4f4f4"/><path d="m27 36 6 5" stroke="#a8a29a" stroke-width="1.500"/><path d="M11 54h43" stroke="#f8d2a4" stroke-width="2"/></svg>
        <svg class="size-[66px]" viewBox="0 0 64 64"><rect width="64" height="64" rx="15" fill="url(#gSky)"/><path d="M35 14 22 36M16 47l3-5M29 14l20 36M12 39h21M43 39h10" stroke="#fff" stroke-width="5" stroke-linecap="round"/></svg>
        <svg class="size-[66px]" viewBox="0 0 64 64"><rect width="64" height="64" rx="15" fill="url(#gGray)"/><circle cx="32" cy="32" r="27" fill="#5c5f62" stroke="#222" stroke-width="2"/><circle cx="32" cy="32" r="23" fill="none" stroke="#b6b8ba" stroke-width="3" stroke-dasharray="2 1"/><circle cx="32" cy="32" r="17" fill="#55585b" stroke="#2b2b2b" stroke-width="3"/><circle cx="32" cy="32" r="19" fill="none" stroke="#a9abad" stroke-width="2"/><path d="M32 32h21M32 32 21 14M32 32 21 50" stroke="#c4c6c8" stroke-width="3"/><circle cx="32" cy="32" r="5" fill="#77797b" stroke="#c4c6c8" stroke-width="2"/></svg>
        <i class="w-0.5 h-[76px] mx-2 bg-[#3b382f]"></i>
        <div class="relative"><svg class="size-[66px]"><use href="#chromeApp"/></svg><i class="absolute left-1/2 -ml-1 top-[75px] size-2 rounded-full bg-black"></i></div>
        <div class="relative"><svg class="size-[66px]"><use href="#teamsApp"/></svg><i class="absolute left-1/2 -ml-1 top-[75px] size-2 rounded-full bg-black"></i></div>
        <div class="relative"><svg class="size-[66px]"><use href="#codeApp"/></svg><i class="absolute left-1/2 -ml-1 top-[75px] size-2 rounded-full bg-black"></i></div>
        <i class="w-0.5 h-[76px] mx-2 bg-[#3b382f]"></i>
        <div class="flex gap-2 -ml-[6px] items-center">
            <div class="relative py-2"><svg class="w-[78px] h-11" viewBox="0 0 78 44"><path d="M0 0h78v44H0z" fill="#f7f7f7"/><path d="M0 0h12v44H0z" fill="#e2e2e0"/><path d="M14 5h13v14H14z" fill="#444"/><path d="M30 11h10M14 25h60M14 30h60M14 35h50M14 40h50" stroke="#c4c4c4"/><path d="M30 18h12" stroke="#e0414e" stroke-width="2"/></svg><svg class="absolute right-0 -bottom-[6px] size-[25px]"><use href="#musicApp"/></svg></div>
            <div class="relative py-2"><svg class="w-[78px] h-11" viewBox="0 0 78 44"><path d="M0 0h78v44H0z" fill="#f4f4f6"/><path d="M0 0h78v6H0z" fill="#33345c"/><path d="M0 6h20v38H0z" fill="#e6e6ee"/><path d="M5 10h12M5 15h12M5 20h12M5 25h12M5 30h12M5 35h12M23 16h30M54 12h20" stroke="#a3a6cc"/><path d="M26 28h13" stroke="#e0c96a" stroke-width="3"/></svg><svg class="absolute right-0 -bottom-[6px] size-[25px]"><use href="#teamsApp"/></svg></div>
            <div class="relative py-2"><svg class="w-[78px] h-11" viewBox="0 0 78 44"><path d="M0 0h78v44H0z" fill="#fafafa"/><path d="M0 0h78v7H0z" fill="#8e2420"/><path d="M8 14h38" stroke="#333" stroke-width="1.500"/><path d="M8 19h44M8 23h44M8 27h40M8 32h44M8 36h38M57 12h9M57 18h12" stroke="#bbb"/><path d="M57 25h14" stroke="#a8d28c" stroke-width="2"/></svg><svg class="absolute right-0 -bottom-[6px] size-[25px]"><use href="#chromeApp"/></svg></div>
            <div class="relative py-2"><svg class="w-[78px] h-11" viewBox="0 0 78 44"><path d="M0 0h78v44H0z" fill="#fafafa"/><path d="M0 0h11v44H0z" fill="#dadad8"/><path d="M13 6h18M13 12h18M13 18h18M13 24h18M13 30h18M13 36h18" stroke="#bbb" stroke-width="2"/><path d="M40 4h32" stroke="#3f74dd" stroke-width="4"/><path d="M40 12h34M40 17h34M40 22h34M40 28h28M40 34h20" stroke="#a9c0e8"/></svg><svg class="absolute right-0 -bottom-[6px] size-[25px]"><use href="#mailApp"/></svg></div>
            <div class="relative py-2"><svg class="w-[78px] h-11" viewBox="0 0 78 44"><path d="M0 0h78v44H0z" fill="#25272d"/><path d="M18 4h20M18 8h30M18 12h24M18 16h30" stroke="#547a55"/><path d="M4 28h20M26 28h14M42 28h14M58 28h14M4 34h20M26 34h14M42 34h14M4 39h20M42 39h14" stroke="#4d5a6c"/></svg><svg class="absolute right-0 -bottom-[6px] size-[25px]"><use href="#codeApp"/></svg></div>
            <div class="relative py-2"><svg class="w-[78px] h-11" viewBox="0 0 78 44"><path d="M0 0h78v44H0z" fill="#33475a"/><path d="M0 0h78v4H0z" fill="#2f4c2f"/><path d="M42 10h32v26H42z" fill="#253545"/><path d="M32 8h6" stroke="#9fc4e6" stroke-width="2"/><path d="M6 13h14M6 26h10M6 32h10M18 38h6M44 12h26M44 17h18" stroke="#6d859c"/></svg><svg class="absolute right-0 -bottom-[6px] size-[25px]"><use href="#chromeApp"/></svg></div>
        </div>
        <svg class="w-[58px] h-[74px] -ml-[2px]" viewBox="0 0 58 74"><path d="M0 7q0-5 29-5t29 5l-7 59q-1 6-22 6T7 66z" fill="url(#gTrash)"/><ellipse cx="29" cy="10" rx="28" ry="8" fill="#bdbbb6" stroke="#eee" stroke-width="2"/></svg>
    </div>
</body>
</html>
